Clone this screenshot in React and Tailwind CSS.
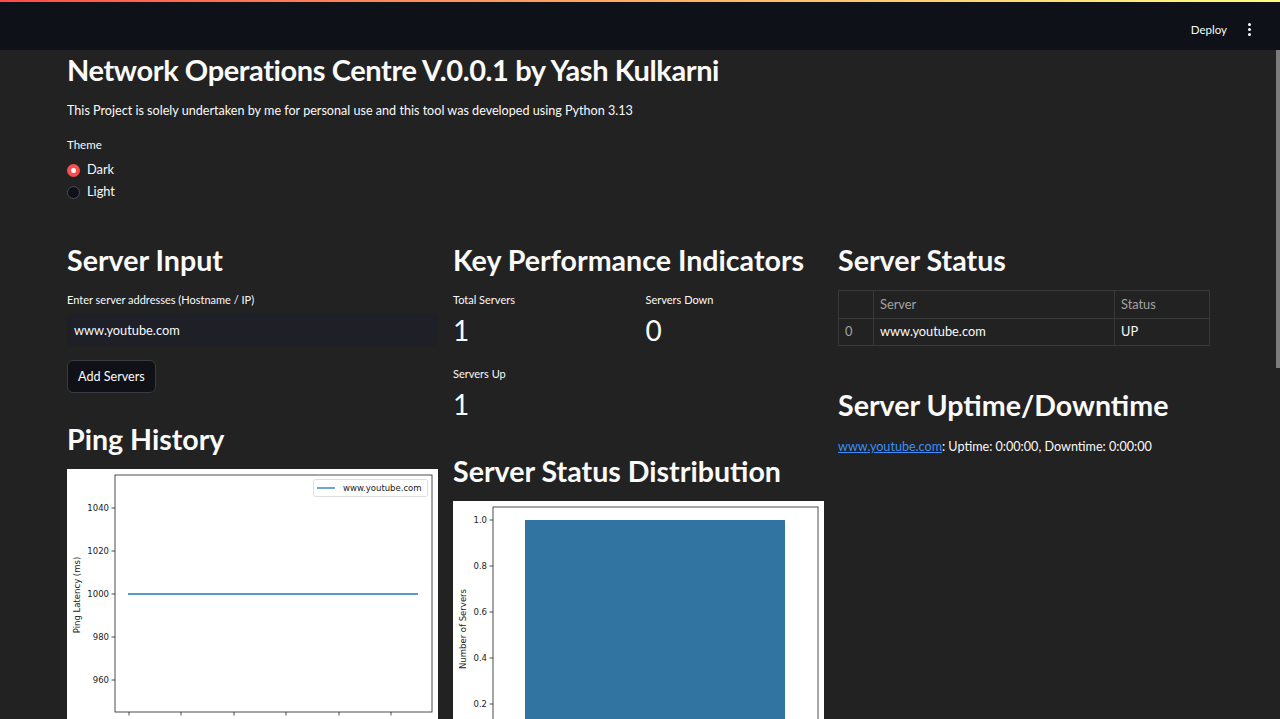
import React from "react";

const FONT = { fontFamily: "Lato, 'Noto Sans', sans-serif" };
const MPL = { fontFamily: "'DejaVu Sans', sans-serif" };

function PingChart() {
  const yt = [
    { v: "1040", y: 39 },
    { v: "1020", y: 82 },
    { v: "1000", y: 125 },
    { v: "980", y: 168 },
    { v: "960", y: 211 },
  ];
  const xt = [62, 114, 167, 219, 272, 324];
  return (
    <svg width="371" height="278" viewBox="0 0 371 278" style={MPL}>
      <rect x="0" y="0" width="371" height="278" fill="#ffffff" />
      <rect x="48" y="6" width="317" height="237" fill="none" stroke="#222" strokeWidth="0.8" />
      {yt.map((t) => (
        <g key={t.v}>
          <line x1="44.5" x2="48" y1={t.y} y2={t.y} stroke="#222" strokeWidth="0.8" />
          <text x="42" y={t.y + 3} fontSize="8.5" textAnchor="end" fill="#222">{t.v}</text>
        </g>
      ))}
      {xt.map((x) => (
        <line key={x} x1={x} x2={x} y1="243" y2="246.5" stroke="#222" strokeWidth="0.8" />
      ))}
      <text x="0" y="0" fontSize="8.5" fill="#222" textAnchor="middle" transform="translate(13 126) rotate(-90)">Ping Latency (ms)</text>
      <line x1="61" x2="351" y1="125" y2="125" stroke="#1f77b4" strokeWidth="1.3" />
      <rect x="246.5" y="10.5" width="114" height="17" rx="2" fill="#fff" stroke="#d6d6d6" strokeWidth="0.8" />
      <line x1="250" x2="268" y1="19" y2="19" stroke="#1f77b4" strokeWidth="1.3" />
      <text x="276" y="22" fontSize="8.5" fill="#222">www.youtube.com</text>
    </svg>
  );
}

function BarChart() {
  const yt = [
    { v: "1.0", y: 19 },
    { v: "0.8", y: 65 },
    { v: "0.6", y: 111 },
    { v: "0.4", y: 157 },
    { v: "0.2", y: 203 },
  ];
  return (
    <svg width="371" height="278" viewBox="0 0 371 278" style={MPL}>
      <rect x="0" y="0" width="371" height="278" fill="#ffffff" />
      <rect x="72" y="19" width="260" height="240" fill="#3274a1" />
      <rect x="40" y="6" width="325" height="250" fill="none" stroke="#222" strokeWidth="0.8" />
      {yt.map((t) => (
        <g key={t.v}>
          <line x1="36.5" x2="40" y1={t.y} y2={t.y} stroke="#222" strokeWidth="0.8" />
          <text x="34" y={t.y + 3} fontSize="8.5" textAnchor="end" fill="#222">{t.v}</text>
        </g>
      ))}
      <text x="0" y="0" fontSize="8.5" fill="#222" textAnchor="middle" transform="translate(13 128) rotate(-90)">Number of Servers</text>
    </svg>
  );
}

function Heading({ children, className = "" }) {
  return (
    <h2 className={"text-[28.6px] leading-[36px] font-bold text-[#fafafa] " + className}>{children}</h2>
  );
}

function Metric({ label, value }) {
  return (
    <div className="flex flex-col">
      <div className="text-[11px] leading-[16px] text-[#fafafa]">{label}</div>
      <div className="mt-[7px] text-[28px] leading-[30px] text-[#fafafa]">{value}</div>
    </div>
  );
}

export default function App() {
  return (
    <div className="relative h-[719px] w-[1280px] overflow-hidden bg-[#222222] text-[#fafafa]" style={FONT}>
      <header className="relative flex h-[50px] items-center justify-end bg-[#0e1117] pr-[29px] pt-[9px]">
        <div className="absolute left-0 right-0 top-0 h-[2px] bg-gradient-to-r from-[#ff4b4b] to-[#fffd80]" />
        <span className="text-[11.5px] text-[#fafafa] mr-[21px]">Deploy</span>
        <div className="flex flex-col gap-[2px] items-center">
          <span className="block h-[3px] w-[3px] rounded-full bg-[#fafafa]" />
          <span className="block h-[3px] w-[3px] rounded-full bg-[#fafafa]" />
          <span className="block h-[3px] w-[3px] rounded-full bg-[#fafafa]" />
        </div>
      </header>

      <div className="absolute right-0 top-[50px] h-[318px] w-[4px] bg-[#7b7b7b]" />

      <main className="pl-[67px] w-[1210px]">
        <h1 className="h-[40px] text-[29px] leading-[40px] font-bold tracking-[-0.4px]">
          Network Operations Centre V.0.0.1 by Yash Kulkarni
        </h1>
        <p className="mt-[11px] text-[12.6px] leading-[20px]">
          This Project is solely undertaken by me for personal use and this tool was developed using Python 3.13
        </p>
        <div className="mt-[16px] text-[11.5px] leading-[16px]">Theme</div>
        <div className="mt-[6px] flex flex-col">
          <label className="flex h-[22px] items-center gap-[7px] text-[12.8px]">
            <span className="flex h-[13px] w-[13px] items-center justify-center rounded-full bg-[#ff4b4b]">
              <span className="block h-[5px] w-[5px] rounded-full bg-white" />
            </span>
            Dark
          </label>
          <label className="flex h-[22px] items-center gap-[7px] text-[12.8px]">
            <span className="block h-[13px] w-[13px] rounded-full border border-[#4a4d56] bg-[#0e1117]" />
            Light
          </label>
        </div>

        <div className="mt-[39px] grid grid-cols-[371px_370px_372px] gap-x-[15px]">
          <section className="flex flex-col">
            <Heading>Server Input</Heading>
            <div className="mt-[14px] text-[11px] leading-[16px]">Enter server addresses (Hostname / IP)</div>
            <div className="mt-[5px] flex h-[33px] items-center rounded-[6px] bg-[#1e1f27] px-[7px] pt-[2px] text-[12.8px]">
              www.youtube.com
            </div>
            <div className="mt-[14px]">
              <button className="h-[33px] rounded-[6px] border border-[#3a3c44] bg-[#0f1117] px-[10px] pt-[2px] text-[12.6px] text-[#fafafa]">
                Add Servers
              </button>
            </div>
            <Heading className="mt-[28px]">Ping History</Heading>
            <div className="mt-[12px] h-[278px] w-[371px] bg-white">
              <PingChart />
            </div>
          </section>

          <section className="flex flex-col">
            <Heading>Key Performance Indicators</Heading>
            <div className="mt-[14px] grid grid-cols-2 gap-x-[15px] gap-y-[21px]">
              <Metric label="Total Servers" value="1" />
              <Metric label="Servers Down" value="0" />
              <Metric label="Servers Up" value="1" />
            </div>
            <Heading className="mt-[34px]">Server Status Distribution</Heading>
            <div className="mt-[12px] h-[278px] w-[371px] bg-white">
              <BarChart />
            </div>
          </section>

          <section className="flex flex-col">
            <Heading>Server Status</Heading>
            <table className="mt-[12px] w-[372px] border-collapse text-[12.8px]">
              <thead>
                <tr className="h-[28px]">
                  <th className="w-[35px] border border-[#393939]"></th>
                  <th className="w-[241px] border border-[#393939] px-[6px] text-left font-normal text-[#a3a3a3]">Server</th>
                  <th className="border border-[#393939] px-[6px] text-left font-normal text-[#a3a3a3]">Status</th>
                </tr>
              </thead>
              <tbody>
                <tr className="h-[27px]">
                  <td className="border border-[#393939] px-[6px] text-[#a3a3a3]">0</td>
                  <td className="border border-[#393939] px-[6px]">www.youtube.com</td>
                  <td className="border border-[#393939] px-[6px]">UP</td>
                </tr>
              </tbody>
            </table>
            <Heading className="mt-[41px]">Server Uptime/Downtime</Heading>
            <p className="mt-[14px] text-[12.6px] leading-[20px]">
              <a className="text-[#3d8ef7] underline">www.youtube.com</a>: Uptime: 0:00:00, Downtime: 0:00:00
            </p>
          </section>
        </div>
      </main>
    </div>
  );
}
